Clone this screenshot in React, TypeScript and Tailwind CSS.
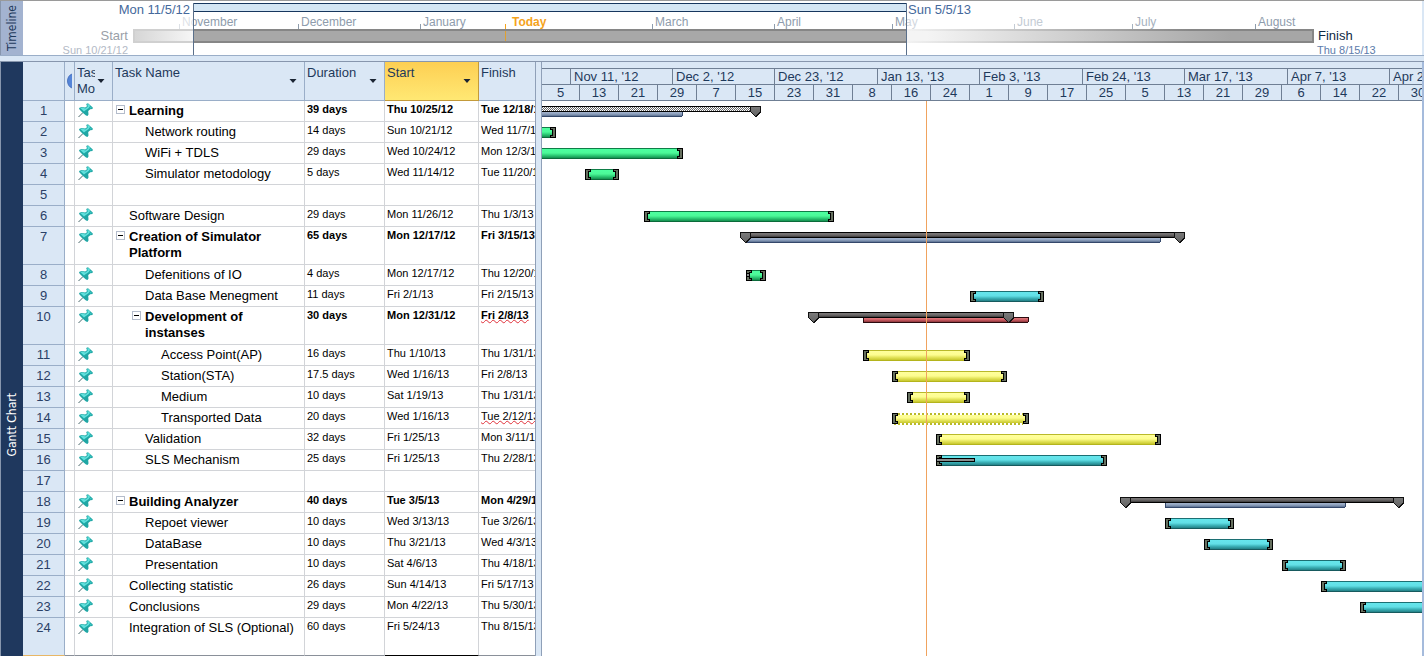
import React from 'react';

type Task = {
  id: number;
  name?: string;
  level?: number;
  summary?: boolean;
  duration?: string;
  start?: string;
  finish?: string;
  late?: boolean;
  tall?: boolean;
};

type BarColor = 'green' | 'cyan' | 'yellow';

type Bar =
  | { row: number; kind: 'task'; from: number; to: number; color: BarColor; dashed?: boolean; progress?: number }
  | { row: number; kind: 'summary'; from: number; to: number; hatched?: boolean; under: [number, number]; critical?: boolean };

const tasks: Task[] = [
  { id: 1, name: 'Learning', level: 0, summary: true, duration: '39 days', start: 'Thu 10/25/12', finish: 'Tue 12/18/12' },
  { id: 2, name: 'Network routing', level: 1, duration: '14 days', start: 'Sun 10/21/12', finish: 'Wed 11/7/12' },
  { id: 3, name: 'WiFi + TDLS', level: 1, duration: '29 days', start: 'Wed 10/24/12', finish: 'Mon 12/3/12' },
  { id: 4, name: 'Simulator metodology', level: 1, duration: '5 days', start: 'Wed 11/14/12', finish: 'Tue 11/20/12' },
  { id: 5 },
  { id: 6, name: 'Software Design', level: 0, duration: '29 days', start: 'Mon 11/26/12', finish: 'Thu 1/3/13' },
  { id: 7, name: 'Creation of Simulator Platform', level: 0, summary: true, duration: '65 days', start: 'Mon 12/17/12', finish: 'Fri 3/15/13', tall: true },
  { id: 8, name: 'Defenitions of IO', level: 1, duration: '4 days', start: 'Mon 12/17/12', finish: 'Thu 12/20/12' },
  { id: 9, name: 'Data Base Menegment', level: 1, duration: '11 days', start: 'Fri 2/1/13', finish: 'Fri 2/15/13' },
  { id: 10, name: 'Development of instanses', level: 1, summary: true, duration: '30 days', start: 'Mon 12/31/12', finish: 'Fri 2/8/13', late: true, tall: true },
  { id: 11, name: 'Access Point(AP)', level: 2, duration: '16 days', start: 'Thu 1/10/13', finish: 'Thu 1/31/13' },
  { id: 12, name: 'Station(STA)', level: 2, duration: '17.5 days', start: 'Wed 1/16/13', finish: 'Fri 2/8/13' },
  { id: 13, name: 'Medium', level: 2, duration: '10 days', start: 'Sat 1/19/13', finish: 'Thu 1/31/13' },
  { id: 14, name: 'Transported Data', level: 2, duration: '20 days', start: 'Wed 1/16/13', finish: 'Tue 2/12/13', late: true },
  { id: 15, name: 'Validation', level: 1, duration: '32 days', start: 'Fri 1/25/13', finish: 'Mon 3/11/13' },
  { id: 16, name: 'SLS Mechanism', level: 1, duration: '25 days', start: 'Fri 1/25/13', finish: 'Thu 2/28/13' },
  { id: 17 },
  { id: 18, name: 'Building Analyzer', level: 0, summary: true, duration: '40 days', start: 'Tue 3/5/13', finish: 'Mon 4/29/13' },
  { id: 19, name: 'Repoet viewer', level: 1, duration: '10 days', start: 'Wed 3/13/13', finish: 'Tue 3/26/13' },
  { id: 20, name: 'DataBase', level: 1, duration: '10 days', start: 'Thu 3/21/13', finish: 'Wed 4/3/13' },
  { id: 21, name: 'Presentation', level: 1, duration: '10 days', start: 'Sat 4/6/13', finish: 'Thu 4/18/13' },
  { id: 22, name: 'Collecting statistic', level: 0, duration: '26 days', start: 'Sun 4/14/13', finish: 'Fri 5/17/13' },
  { id: 23, name: 'Conclusions', level: 0, duration: '29 days', start: 'Mon 4/22/13', finish: 'Thu 5/30/13' },
  { id: 24, name: 'Integration of SLS (Optional)', level: 0, duration: '60 days', start: 'Fri 5/24/13', finish: 'Thu 8/15/13', tall: true },
];

const ROW = 21;
const TALL_ROW = 38;

const rowTops: number[] = [];
let chartHeight = 0;
for (const t of tasks) {
  rowTops.push(chartHeight);
  chartHeight += t.tall ? TALL_ROW : ROW;
}

const bars: Bar[] = [
  { row: 1, kind: 'summary', from: -20, to: 219, hatched: true, under: [-20, 141] },
  { row: 2, kind: 'task', from: -20, to: 14, color: 'green' },
  { row: 3, kind: 'task', from: -20, to: 141, color: 'green' },
  { row: 4, kind: 'task', from: 43, to: 77, color: 'green' },
  { row: 6, kind: 'task', from: 102, to: 292, color: 'green' },
  { row: 7, kind: 'summary', from: 198, to: 643, under: [204, 619] },
  { row: 8, kind: 'task', from: 204, to: 224, color: 'green', progress: 4 },
  { row: 9, kind: 'task', from: 428, to: 502, color: 'cyan' },
  { row: 10, kind: 'summary', from: 266, to: 472, under: [321, 487], critical: true },
  { row: 11, kind: 'task', from: 321, to: 428, color: 'yellow' },
  { row: 12, kind: 'task', from: 350, to: 465, color: 'yellow' },
  { row: 13, kind: 'task', from: 365, to: 428, color: 'yellow' },
  { row: 14, kind: 'task', from: 350, to: 487, color: 'yellow', dashed: true },
  { row: 15, kind: 'task', from: 394, to: 619, color: 'yellow' },
  { row: 16, kind: 'task', from: 394, to: 565, color: 'cyan', progress: 39 },
  { row: 18, kind: 'summary', from: 578, to: 862, under: [623, 804] },
  { row: 19, kind: 'task', from: 623, to: 692, color: 'cyan' },
  { row: 20, kind: 'task', from: 662, to: 731, color: 'cyan' },
  { row: 21, kind: 'task', from: 740, to: 804, color: 'cyan' },
  { row: 22, kind: 'task', from: 779, to: 1000, color: 'cyan' },
  { row: 23, kind: 'task', from: 818, to: 1000, color: 'cyan' },
];

const edge: Record<BarColor, [string, string]> = {
  green: ['#0f7d47', '#0b6a3a'],
  cyan: ['#1c6f73', '#175a5e'],
  yellow: ['#b9b92a', '#b4b41c'],
};

function Cap({ x, y, flip }: { x: number; y: number; flip?: boolean }) {
  return (
    <g transform={flip ? `translate(${x} ${y}) scale(-1 1)` : `translate(${x} ${y})`}>
      <path d="M0 0H6V3H4V8H6V11H0Z" fill="#000" />
      <path d="M1 1H5V2H3V9H5V10H1Z" fill="#66705f" />
    </g>
  );
}

function Marker({ x, y }: { x: number; y: number }) {
  return (
    <g>
      <path d={`M${x} ${y}h11v6l-5.5 5.5L${x} ${y + 6}Z`} fill="#111" />
      <path d={`M${x + 1} ${y + 1}h9v4.600l-4.500 4.500l-4.500 -4.500Z`} fill="url(#marker)" />
    </g>
  );
}

function BarShape({ bar }: { bar: Bar }) {
  const y = rowTops[bar.row - 1] + 5;
  const w = bar.to - bar.from;
  if (bar.kind === 'task') {
    const [top, bottom] = edge[bar.color];
    return (
      <g>
        <rect x={bar.from + 1} y={y} width={w - 2} height={11} fill={`url(#${bar.color})`} />
        {bar.dashed ? (
          <g strokeWidth={2} strokeDasharray="2 2">
            <path d={`M${bar.from + 6} ${y + 1}H${bar.to - 6}M${bar.from + 6} ${y + 11}H${bar.to - 6}`} stroke="#fff" strokeDasharray="none" />
            <path d={`M${bar.from + 6} ${y + 1}H${bar.to - 6}M${bar.from + 2} ${y + 11}H${bar.to - 6}`} stroke="#b9b92a" />
          </g>
        ) : (
          <g>
            <rect x={bar.from} y={y} width={w} height={1} fill={top} />
            <rect x={bar.from} y={y + 10} width={w} height={1} fill={bottom} />
          </g>
        )}
        <Cap x={bar.from} y={y} />
        <Cap x={bar.to} y={y} flip />
        {bar.progress && (
          <g>
            <rect x={bar.from} y={y + 3} width={bar.progress} height={4} fill="#000" />
            <rect x={bar.from + 1} y={y + 4} width={bar.progress - 2} height={2} fill="#8a8f8f" />
          </g>
        )}
      </g>
    );
  }
  const [u0, u1] = bar.under;
  return (
    <g>
      <rect x={u0} y={y + 5} width={u1 - u0} height={6} rx={2} fill={bar.critical ? '#2c0b0f' : '#34486b'} />
      <rect x={u0 + 1} y={y + 6} width={u1 - u0 - 2} height={4} rx={1} fill={bar.critical ? 'url(#red)' : 'url(#blue)'} />
      <rect x={bar.from} y={y} width={w} height={6} fill="#000" />
      <rect x={bar.from + 1} y={y + 1} width={w - 2} height={4} fill={bar.hatched ? 'url(#hatch)' : 'url(#steel)'} />
      <Marker x={bar.from} y={y} />
      <Marker x={bar.to - 11} y={y} />
    </g>
  );
}

function Gradient({ id, stops }: { id: string; stops: [string, string][] }) {
  return (
    <linearGradient id={id} x1="0" y1="0" x2="0" y2="1">
      {stops.map(([o, c]) => (
        <stop key={o} offset={o} stopColor={c} />
      ))}
    </linearGradient>
  );
}

function Chart() {
  return (
    <svg className="block w-full" height={chartHeight} role="img" aria-label="Gantt bars" shapeRendering="crispEdges">
      <defs>
        <Gradient id="green" stops={[['0.1', '#4dffa0'], ['0.45', '#4cf898'], ['0.65', '#2fcf78'], ['1', '#0b7a42']]} />
        <Gradient id="cyan" stops={[['0.1', '#66e6ec'], ['0.45', '#62dfe6'], ['0.65', '#3db4ba'], ['1', '#1a6e74']]} />
        <Gradient id="yellow" stops={[['0.1', '#ffff9c'], ['0.45', '#fdfd90'], ['0.65', '#e6e65e'], ['1', '#bcbc1c']]} />
        <Gradient id="steel" stops={[['0', '#7a7777'], ['0.5', '#6c6969'], ['1', '#3c3a3a']]} />
        <Gradient id="marker" stops={[['0', '#7a7a7a'], ['1', '#626262']]} />
        <Gradient id="blue" stops={[['0', '#a3b3cc'], ['0.5', '#8fa2be'], ['1', '#5b7091']]} />
        <Gradient id="red" stops={[['0', '#e07a7e'], ['0.5', '#c95a60'], ['1', '#8c363c']]} />
        <pattern id="hatch" width="2" height="2" patternUnits="userSpaceOnUse">
          <rect width="2" height="2" fill="#fff" />
          <rect width="1" height="1" fill="#6a6a6a" />
          <rect x="1" y="1" width="1" height="1" fill="#6a6a6a" />
        </pattern>
      </defs>
      {bars.map((b) => (
        <BarShape key={b.row} bar={b} />
      ))}
      <rect x={384} y={0} width={1} height={chartHeight} fill="#f0a35e" />
    </svg>
  );
}

function Pin() {
  return (
    <svg width="16" height="16" viewBox="0 0 16 16" className="block" aria-label="Manually scheduled">
      <path d="M0.500 15L5 10.500" stroke="#48676a" strokeWidth="1" />
      <path d="M1 6L3.500 5L7.200 5.600L9 4.200L8.200 2L10 1.200L14.800 5.400L14.500 7L12.300 7.200L10.200 9L10.500 12.500L9.500 14L8 13.500L5 11L1.500 7.500Z" fill="#1fa6a4" />
      <path d="M2.300 6L4 5.600L7.500 6.500L9.800 4.600L9.200 2.400L10.200 2L12.200 3.800L10.800 6L7.200 8.500L6 9.500Z" fill="#5fe0dc" />
      <path d="M12.500 4.500L14 6L11.500 6.500Z" fill="#3cc8c5" />
    </svg>
  );
}

function Arrow({ label }: { label: string }) {
  return (
    <button type="button" aria-label={label} className="mt-3 h-2 w-2 shrink-0">
      <svg width="8" height="8" viewBox="0 0 8 8" className="block">
        <path d="M0.500 2H7.500L4 6Z" fill="#1a2433" />
      </svg>
    </button>
  );
}

const indent = ['pl-[3px]', 'pl-[19px]', 'pl-[35px]'];

function TaskRow({ task, last }: { task: Task; last: boolean }) {
  const weight = task.summary ? 'font-bold' : '';
  const line = last ? 'border-b-[#8a9099]' : 'border-b-[#d2d4d8]';
  const cell = `border-b border-r border-r-[#d2d4d8] p-0 align-top overflow-hidden whitespace-nowrap ${line}`;
  return (
    <tr className={task.tall ? 'h-[38px]' : 'h-[21px]'}>
      <th scope="row" className={`border-r border-b border-r-[#9aaec8] bg-[#dae7f5] p-0 pt-px align-top text-[13px] leading-[18px] font-normal text-[#2a4066] ${last ? 'border-b-[#e8b766]' : 'border-b-[#9aaec8]'}`}>
        {task.id}
      </th>
      <td className={cell} />
      <td className={cell}>
        <div className="h-[17px] pt-px pl-[3px]">{task.name && <Pin />}</div>
      </td>
      <td className={`border-r border-b border-r-[#d2d4d8] p-0 align-top ${line}`}>
        {task.name && (
          <div className={`flex pt-[2px] text-[13px] leading-4 ${indent[task.level ?? 0]}`}>
            <span className="w-[13px] shrink-0 pt-[2px]">
              {task.summary && (
                <button type="button" aria-label={`Collapse ${task.name}`} className="flex h-[9px] w-[9px] items-center justify-center border border-[#b4bccb]">
                  <span className="h-px w-[5px] bg-black" />
                </button>
              )}
            </span>
            <span className={weight}>{task.name}</span>
          </div>
        )}
      </td>
      <td className={`${cell} pl-[2px] text-[11px] leading-4 ${weight}`}>{task.duration}</td>
      <td className={`${cell} pl-[2px] text-[11px] leading-4 ${last ? 'border-b-black' : ''} ${weight}`}>{task.start}</td>
      <td className={`${cell} pl-[2px] text-[11px] leading-4 ${weight}`}>
        <span className={task.late ? 'underline decoration-[#e0303a] decoration-wavy decoration-1 underline-offset-0' : ''}>{task.finish}</span>
      </td>
    </tr>
  );
}

function Head({ title, active }: { title: string; active?: boolean }) {
  return (
    <th scope="col" className={`border-b border-r p-0 align-top font-normal ${active ? 'border-[#c39a3a] bg-linear-to-b from-[#fdcf52] to-[#ffe873]' : 'border-[#9aaec8]'}`}>
      <div className="flex justify-between pt-[3px] pr-[7px] pl-[2px] text-left">
        <span className="leading-4 whitespace-nowrap">{title}</span>
        <Arrow label={`${title} options`} />
      </div>
    </th>
  );
}

function Sheet() {
  return (
    <div className="w-[512px] shrink-0 overflow-hidden">
      <table className="w-[551px] table-fixed border-separate border-spacing-0 text-black">
        <colgroup>
          <col className="w-[42px]" />
          <col className="w-[10px]" />
          <col className="w-[38px]" />
          <col className="w-[192px]" />
          <col className="w-[80px]" />
          <col className="w-[94px]" />
          <col className="w-[95px]" />
        </colgroup>
        <thead className="bg-[#dae7f5] text-[13px] text-[#1e395b]">
          <tr className="h-[39px]">
            <th scope="col" aria-label="Row" className="border-r border-b border-[#9aaec8] p-0" />
            <th scope="col" aria-label="Indicators" className="overflow-hidden border-r border-b border-[#9aaec8] p-0">
              <svg width="7" height="16" viewBox="0 0 7 16" className="ml-[2px] block">
                <path d="M5 1C2 2 0.500 5 0.500 8C0.500 11 2 14 5 15Z" fill="#5585d8" />
                <path d="M5 1C2 2 0.500 5 0.500 8C0.500 11 2 14 5 15" fill="none" stroke="#3f68b8" strokeWidth="0.800" />
              </svg>
            </th>
            <th scope="col" className="border-r border-b border-[#9aaec8] p-0 align-top font-normal">
              <div className="flex pt-[3px] pl-[2px] text-left">
                <span className="w-[18px] overflow-hidden leading-4 whitespace-nowrap">
                  Task
                  <br />
                  Mode
                </span>
                <span className="pl-[2px]">
                  <Arrow label="Task Mode options" />
                </span>
              </div>
            </th>
            <Head title="Task Name" />
            <Head title="Duration" />
            <Head title="Start" active />
            <Head title="Finish" />
          </tr>
        </thead>
        <tbody>
          {tasks.map((t, i) => (
            <TaskRow key={t.id} task={t} last={i === tasks.length - 1} />
          ))}
        </tbody>
      </table>
    </div>
  );
}

const majorTicks: [string, string][] = [
  ["Nov 11, '12", 'w-[102px]'],
  ["Dec 2, '12", 'w-[102px]'],
  ["Dec 23, '12", 'w-[103px]'],
  ["Jan 13, '13", 'w-[102px]'],
  ["Feb 3, '13", 'w-[103px]'],
  ["Feb 24, '13", 'w-[102px]'],
  ["Mar 17, '13", 'w-[103px]'],
  ["Apr 7, '13", 'w-[102px]'],
  ["Apr 28, '13", 'w-[102px]'],
];

const minorTicks = ['13', '21', '29', '7', '15', '23', '31', '8', '16', '24', '1', '9', '17', '25', '5', '13', '21', '29', '6', '14', '22', '30'];

function Timescale() {
  return (
    <div className="h-[39px] overflow-hidden border-b border-[#6f7f94] bg-[#dae7f5] text-[13px] text-[#1e395b]">
      <div className="h-[6px]" />
      <div className="flex h-4 border-t border-[#6f7f94]">
        <span className="w-7 shrink-0" />
        {majorTicks.map(([label, width]) => (
          <span key={label} className={`shrink-0 border-l border-[#6f7f94] pl-[3px] leading-[15px] ${width}`}>
            {label}
          </span>
        ))}
      </div>
      <div className="flex h-4 border-t border-[#6f7f94] text-center leading-[15px]">
        <span className="w-[37px] shrink-0">5</span>
        {minorTicks.map((label, i) => (
          <span key={i} className="w-[39px] shrink-0 border-l border-[#6f7f94]">
            {label}
          </span>
        ))}
      </div>
    </div>
  );
}

const months: [string, string, string][] = [
  ['November', 'w-[119px]', 'text-[#8e9cac]'],
  ['December', 'w-[122px]', 'text-[#8e9cac]'],
  ['January', 'w-[85px]', 'text-[#8e9cac]'],
  ['Today', 'w-[147px]', 'font-bold text-[#f5a31c]'],
  ['March', 'w-[122px]', 'text-[#8e9cac]'],
  ['April', 'w-[118px]', 'text-[#8e9cac]'],
  ['May', 'w-[122px]', 'text-[#8e9cac]'],
  ['June', 'w-[118px]', 'text-[#c3cbd4]'],
  ['July', 'w-[123px]', 'text-[#a6b1be]'],
  ['August', 'w-[80px]', 'text-[#8e9cac]'],
];

function Timeline() {
  return (
    <section className="flex h-14 border-y border-t-[#9a9a9a] border-b-[#9aaec8] bg-white">
      <h2 className="flex w-[23px] shrink-0 items-center justify-center border-l border-[#8796ad] bg-[#a3b3d0] font-['DejaVu_Sans_Condensed','DejaVu_Sans',sans-serif] text-xs text-[#1e395b]">
        <span className="rotate-180 [writing-mode:vertical-rl]">Timeline</span>
      </h2>
      <div className="relative min-w-0 flex-1 overflow-hidden pt-[2px]">
        <div className="flex h-3 text-[13px] leading-[13px] text-[#44699c]">
          <span className="w-[168px] shrink-0 pr-px text-right">Mon 11/5/12</span>
          <span className="ml-[2px] h-[9px] w-[714px] shrink-0 border-y border-[#17375e] bg-[#d4e6f4]" />
          <span className="pl-px">Sun 5/5/13</span>
        </div>
        <div className="flex h-[14px] pl-[156px] text-xs leading-[13px]">
          {months.map(([label, width, color]) => (
            <span key={label} className={`flex shrink-0 items-end ${width} ${color}`}>
              <span className={label === 'Today' ? 'mr-[6px] h-[5px] w-px bg-[#f5a31c]' : 'mr-[2px] h-[5px] w-px bg-current'} />
              <span>{label}</span>
            </span>
          ))}
        </div>
        <div className="flex h-[14px] text-[13px] leading-[14px]">
          <span className="w-[105px] shrink-0 text-right text-[#9a9fa8]">Start</span>
          <span className="ml-[5px] w-[60px] shrink-0 border-2 border-r-0 border-[#d0d0d0] bg-linear-to-r from-[#d6d6d6] to-[#f6f6f6]" />
          <span className="flex w-[714px] shrink-0 border-y-2 border-[#868686] bg-[#a8a8a8] pl-[312px]">
            <span className="w-px bg-[#e0a030]" />
          </span>
          <span className="w-[407px] shrink-0 bg-linear-to-r from-[#f2f2f2] to-[#868686] to-70% py-[2px] pr-[2px]">
            <span className="block h-full bg-linear-to-r from-[#f4f4f4] from-5% to-[#a6a6a6] to-80%" />
          </span>
          <span className="pl-1 text-[#0f2a44]">Finish</span>
        </div>
        <div className="flex h-3 justify-between pt-px text-[11px] leading-3">
          <span className="w-[105px] shrink-0 text-right text-[#b3bac6]">Sun 10/21/12</span>
          <span className="w-[105px] shrink-0 text-[#5d7cab]">Thu 8/15/13</span>
        </div>
        <div className="pointer-events-none absolute top-[2px] bottom-0 left-[170px] w-[714px] border-x border-[#5a6f8a]" />
        <div className="pointer-events-none absolute top-[14px] left-[150px] h-[14px] w-5 bg-white/70" />
        <div className="pointer-events-none absolute top-[14px] left-[884px] h-[14px] w-5 bg-white/60" />
      </div>
      <div className="w-[2px] shrink-0 bg-[#dae7f5]" />
    </section>
  );
}

export default function App() {
  return (
    <main className="overflow-hidden bg-[#dae7f5] font-['Liberation_Sans',Arial,sans-serif]">
      <Timeline />
      <section className="mt-[5px] flex border-t border-[#8796ad] bg-white">
        <h2 className="flex w-[23px] shrink-0 items-center justify-center border-l border-[#8796ad] bg-[#1f385e] pt-[132px] font-['DejaVu_Sans_Condensed','DejaVu_Sans',sans-serif] text-xs text-white">
          <span className="rotate-180 [writing-mode:vertical-rl]">Gantt Chart</span>
        </h2>
        <Sheet />
        <div className="w-[7px] shrink-0 border-x border-[#8fa0b8] bg-[#dae7f5]" />
        <div className="min-w-0 flex-1 overflow-hidden">
          <Timescale />
          <Chart />
        </div>
        <div className="w-[2px] shrink-0 bg-[#a5bbdc]" />
      </section>
    </main>
  );
}
